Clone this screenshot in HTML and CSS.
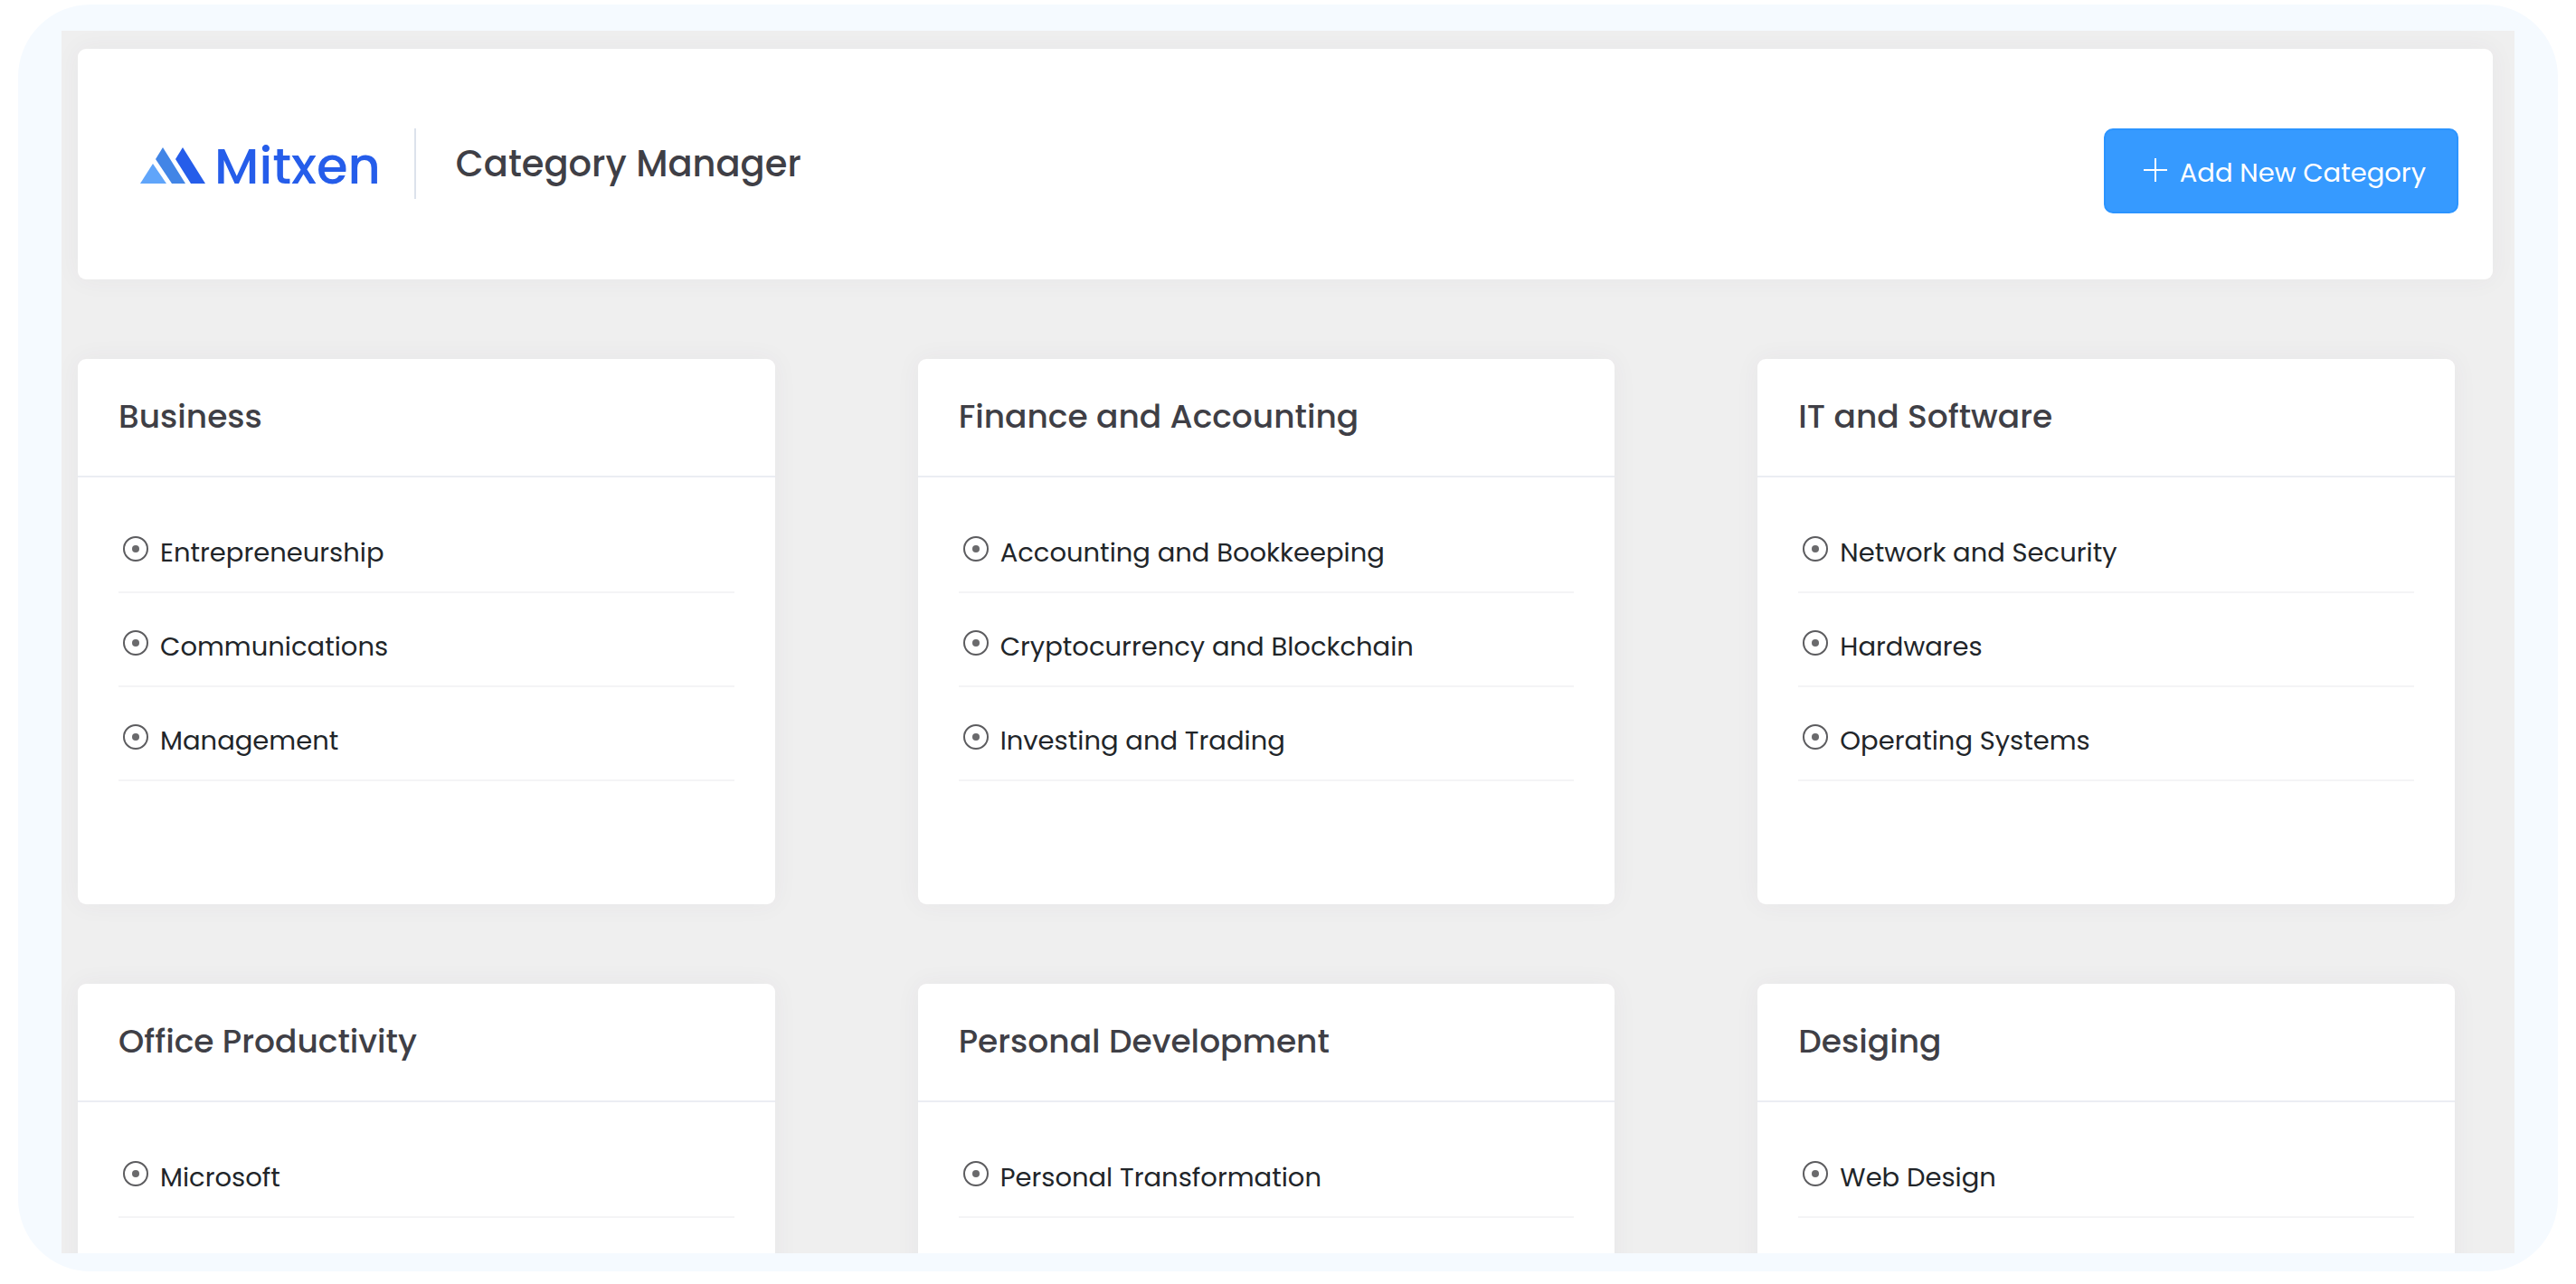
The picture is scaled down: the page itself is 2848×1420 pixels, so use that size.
FILE: index.html
```html
<!DOCTYPE html>
<html lang="en">
<head>
<meta charset="utf-8">
<meta name="viewport" content="width=device-width, initial-scale=1">
<title>Category Manager</title>
<link rel="stylesheet" href="styles.css">
</head>
<body>
<svg class="sprite" aria-hidden="true">
  <symbol id="bullet" viewBox="0 0 28 28">
    <circle cx="14" cy="14" r="13" fill="none" stroke="#5c5c5f" stroke-width="2"/>
    <circle cx="14" cy="14" r="4" fill="#6a6a6c"/>
  </symbol>
</svg>
<div class="frame">
  <div class="panel">
    <header class="topbar">
      <div class="brand">
        <a class="logo" href="#">
          <svg class="logo-mark" viewBox="0 0 72 40" aria-hidden="true">
            <path fill="#60a5fa" d="M0 40 14 18 29 40z"/>
            <path fill="#4285e6" d="M25 0 50 40H35L17 13z"/>
            <path fill="#255dea" d="M47 0 72 40H56L39 13z"/>
          </svg>
          <span class="logo-name">Mitxen</span>
        </a>
        <h1 class="page-title">Category Manager</h1>
      </div>
      <button class="add-button" type="button">
        <svg class="plus" viewBox="0 0 26 26" aria-hidden="true"><path d="M0 13H26M13 0V26" stroke="#fff" stroke-width="2"/></svg>
        <span>Add New Category</span>
      </button>
    </header>
    <main class="grid">
      <section class="card">
        <h2 class="card-title">Business</h2>
        <ul class="items">
          <li><svg class="bullet" aria-hidden="true"><use href="#bullet"/></svg><a href="#">Entrepreneurship</a></li>
          <li><svg class="bullet" aria-hidden="true"><use href="#bullet"/></svg><a href="#">Communications</a></li>
          <li><svg class="bullet" aria-hidden="true"><use href="#bullet"/></svg><a href="#">Management</a></li>
        </ul>
      </section>
      <section class="card">
        <h2 class="card-title">Finance and Accounting</h2>
        <ul class="items">
          <li><svg class="bullet" aria-hidden="true"><use href="#bullet"/></svg><a href="#">Accounting and Bookkeeping</a></li>
          <li><svg class="bullet" aria-hidden="true"><use href="#bullet"/></svg><a href="#">Cryptocurrency and Blockchain</a></li>
          <li><svg class="bullet" aria-hidden="true"><use href="#bullet"/></svg><a href="#">Investing and Trading</a></li>
        </ul>
      </section>
      <section class="card">
        <h2 class="card-title">IT and Software</h2>
        <ul class="items">
          <li><svg class="bullet" aria-hidden="true"><use href="#bullet"/></svg><a href="#">Network and Security</a></li>
          <li><svg class="bullet" aria-hidden="true"><use href="#bullet"/></svg><a href="#">Hardwares</a></li>
          <li><svg class="bullet" aria-hidden="true"><use href="#bullet"/></svg><a href="#">Operating Systems</a></li>
        </ul>
      </section>
      <section class="card">
        <h2 class="card-title">Office Productivity</h2>
        <ul class="items">
          <li><svg class="bullet" aria-hidden="true"><use href="#bullet"/></svg><a href="#">Microsoft</a></li>
        </ul>
      </section>
      <section class="card">
        <h2 class="card-title">Personal Development</h2>
        <ul class="items">
          <li><svg class="bullet" aria-hidden="true"><use href="#bullet"/></svg><a href="#">Personal Transformation</a></li>
        </ul>
      </section>
      <section class="card">
        <h2 class="card-title">Desiging</h2>
        <ul class="items">
          <li><svg class="bullet" aria-hidden="true"><use href="#bullet"/></svg><a href="#">Web Design</a></li>
        </ul>
      </section>
    </main>
  </div>
</div>
</body>
</html>
```
FILE: styles.css
```css
* {
  box-sizing: border-box;
}

body {
  display: flex;
  height: 100vh;
  margin: 0;
  padding: 5px 20px 14px;
  background: #fff;
  color: #212529;
  font-family: Poppins, Inter, sans-serif;
  font-size: 29px;
  line-height: 44px;
}

a {
  color: inherit;
  text-decoration: none;
}

.sprite {
  position: absolute;
  width: 0;
  height: 0;
}

.frame {
  display: flex;
  flex: 1;
  min-width: 0;
  padding: 29px 48px 20px;
  border-radius: 80px;
  background: #f5faff;
}

.panel {
  flex: 1;
  min-width: 0;
  padding: 20px 24px 0 18px;
  overflow: hidden;
  background: #efefef;
}

.topbar,
.card {
  border-radius: 9px;
  background: #fff;
  box-shadow: 0 0 28px rgba(82, 63, 105, 0.05);
}

.topbar {
  display: flex;
  align-items: flex-start;
  justify-content: space-between;
  padding: 88px 38px 73px 69px;
}

.brand {
  display: flex;
  align-items: center;
}

.logo {
  display: flex;
  align-items: baseline;
  gap: 10px;
  padding: 6px 37px 0 0;
  color: #255dea;
}

.logo-mark {
  width: 72px;
  height: 40px;
}

.logo-name {
  font-size: 56px;
  font-weight: 500;
}

.page-title {
  margin: 0;
  padding-left: 44px;
  border-left: 2px solid #dce2ec;
  color: #3f3f46;
  font-size: 40px;
  font-weight: 500;
  line-height: 78px;
}

.add-button {
  display: flex;
  align-items: baseline;
  gap: 14px;
  padding: 25px 34px 21px 42px;
  border: 2px solid #2b94ff;
  border-radius: 10px;
  background: #369aff;
  color: #fff;
  font: inherit;
}

.plus {
  width: 26px;
  height: 26px;
}

.grid {
  display: grid;
  grid-template-columns: repeat(3, minmax(0, 1fr));
  gap: 88px 158px;
  padding: 88px 42px 88px 0;
}

.card {
  min-height: 603px;
}

.card-title {
  margin: 0;
  padding: 42px 45px 43px;
  border-bottom: 2px solid #ebedf3;
  color: #3f3f46;
  font-size: 36px;
  font-weight: 500;
  line-height: 44px;
}

.items {
  margin: 0;
  padding: 24px 45px;
  list-style: none;
}

.items li {
  display: flex;
  align-items: baseline;
  gap: 13px;
  padding: 37px 5px 21px;
  border-bottom: 2px solid #f4f4f6;
}

.bullet {
  flex: none;
  width: 28px;
  height: 28px;
}
```
